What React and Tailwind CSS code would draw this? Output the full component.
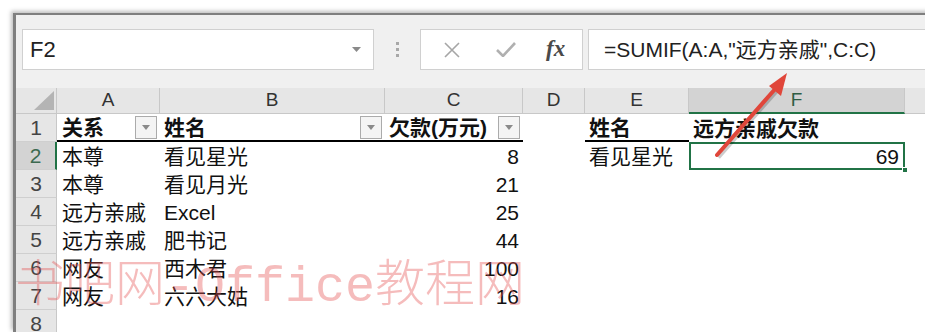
import React from 'react';

const FONT = '"Liberation Sans", "Noto Sans CJK SC", sans-serif';

const cols = [
  { key: 'A', w: 'w-[103px]' },
  { key: 'B', w: 'w-[225px]' },
  { key: 'C', w: 'w-[138px]' },
  { key: 'D', w: 'w-[62px]' },
  { key: 'E', w: 'w-[104px]' },
  { key: 'F', w: 'w-[216px]' },
  { key: 'G', w: 'flex-1' },
];

const rows = [
  { n: 1, A: '关系', B: '姓名', C: '欠款(万元)', E: '姓名', F: '远方亲戚欠款', head: true },
  { n: 2, A: '本尊', B: '看见星光', C: '8', E: '看见星光', F: '69' },
  { n: 3, A: '本尊', B: '看见月光', C: '21' },
  { n: 4, A: '远方亲戚', B: 'Excel', C: '25' },
  { n: 5, A: '远方亲戚', B: '肥书记', C: '44' },
  { n: 6, A: '网友', B: '西木君', C: '100' },
  { n: 7, A: '网友', B: '六六大姑', C: '16' },
  { n: 8 },
];

function FilterButton() {
  return (
    <div className="ml-auto mr-[3px] w-[22px] h-[23px] border border-[#ababab] bg-[#f4f4f4] flex items-center justify-center">
      <svg width="8" height="5" viewBox="0 0 8 5"><path d="M0 0h8L4 5z" fill="#8a8a8a" /></svg>
    </div>
  );
}

function Cell({ col, row }) {
  const v = row[col.key];
  const isNum = col.key === 'C' && !row.head;
  const selected = col.key === 'F' && row.n === 2;
  const underline = row.head && ['A', 'B', 'C', 'E'].includes(col.key);
  let cls = `${col.w} h-[28px] shrink-0 flex items-center relative `;
  if (underline) cls += 'border-b-2 border-black ';
  if (selected) cls += 'border-2 border-[#217346] ';
  const pad = col.key === 'A' ? 'pl-[5px]' : 'pl-[4px]';
  return (
    <div className={cls}>
      {v && (
        <span
          className={`${isNum || selected ? 'ml-auto pr-[4px]' : pad} text-[21px] leading-none whitespace-nowrap text-[#111] ${row.head ? 'font-bold' : ''}`}
        >
          {v}
        </span>
      )}
      {row.head && ['A', 'B', 'C'].includes(col.key) && <FilterButton />}
      {selected && <div className="absolute right-[-5px] bottom-[-5px] w-[6px] h-[6px] bg-[#217346] border border-white" />}
    </div>
  );
}

export default function App() {
  return (
    <div className="w-[925px] h-[332px] overflow-hidden bg-white pt-[13px] pl-[13px] relative" style={{ fontFamily: FONT }}>
      <div className="h-full w-[920px] border-t-2 border-l-[3px] border-[#7f7f7f] bg-[#f0f0f0] shadow-[-2px_-2px_4px_rgba(0,0,0,0.25)]">
        {/* formula bar */}
        <div className="h-[73px] flex items-start pt-[14px] pl-[6px]">
          <div className="w-[352px] h-[41px] bg-white border border-[#d0d0d0] flex items-center pl-[7px] pr-[12px]">
            <span className="text-[22px] text-[#222]">F2</span>
            <svg className="ml-auto" width="9" height="5" viewBox="0 0 9 5"><path d="M0 0h9L4.5 5z" fill="#8a8a8a" /></svg>
          </div>
          <div className="w-[46px] h-[41px] flex flex-col items-center justify-center gap-[3px]">
            <div className="w-[3px] h-[3px] bg-[#a8a8a8]" />
            <div className="w-[3px] h-[3px] bg-[#a8a8a8]" />
            <div className="w-[3px] h-[3px] bg-[#a8a8a8]" />
          </div>
          <div className="w-[163px] h-[41px] bg-white border border-[#d0d0d0] flex items-center">
            <svg className="ml-[23px]" width="16" height="16" viewBox="0 0 16 16"><path d="M1 1l14 14M15 1L1 15" stroke="#a6a6a6" strokeWidth="1.6" /></svg>
            <svg className="ml-[36px]" width="20" height="15" viewBox="0 0 20 15"><path d="M1 8l6 6L19 1" stroke="#b0b0b0" strokeWidth="2.6" fill="none" /></svg>
            <span className="ml-[30px] text-[23px] italic font-bold text-[#4a4a4a]" style={{ fontFamily: '"Liberation Serif", serif' }}>fx</span>
          </div>
          <div className="ml-[5px] flex-1 h-[41px] bg-white border border-[#d0d0d0] border-r-0 flex items-center pl-[15px]">
            <span className="text-[21px] text-[#222] whitespace-nowrap">=SUMIF(A:A,"远方亲戚",C:C)</span>
          </div>
        </div>

        {/* column headers */}
        <div className="flex h-[26px] bg-white">
          <div className="w-[41px] shrink-0 bg-[#e6e6e6] border-r border-b border-[#c8c8c8] flex items-end justify-end pr-[2px] pb-[3px]">
            <svg width="20" height="19" viewBox="0 0 20 19"><path d="M20 0V19H0z" fill="#b4b4b4" /></svg>
          </div>
          {cols.map((c) => (
            <div
              key={c.key}
              className={`${c.w} shrink-0 flex items-center justify-center text-[19px] border-r ${
                c.key === 'F'
                  ? 'bg-[#d3d3d3] border-b-2 border-b-[#217346] border-r-[#c8c8c8] text-[#2f5d44]'
                  : 'bg-[#e6e6e6] border-b border-[#c8c8c8] text-[#333]'
              }`}
            >
              {c.key === 'G' ? '' : c.key}
            </div>
          ))}
        </div>

        {/* rows */}
        {rows.map((r) => (
          <div key={r.n} className="flex bg-white">
            <div
              className={`w-[41px] h-[28px] shrink-0 border-b border-[#cfcfcf] flex items-center justify-center text-[21px] ${
                r.n === 2 ? 'bg-[#d3d3d3] text-[#3c6a50] border-r-2 border-r-[#217346]' : 'bg-[#e6e6e6] text-[#444] border-r border-r-[#c8c8c8]'
              }`}
            >
              {r.n}
            </div>
            {cols.map((c) => (
              <Cell key={c.key} col={c} row={r} />
            ))}
          </div>
        ))}
      </div>

      {/* watermark */}
      <div className="absolute left-[15px] top-[254px] text-[50px] leading-none whitespace-nowrap text-[rgba(230,80,80,0.38)] pointer-events-none flex items-baseline">
        <span style={{ fontFamily: '"Noto Sans CJK SC", sans-serif' }} className="font-light">书吧网</span>
        <span style={{ fontFamily: '"Liberation Mono", "Noto Sans CJK SC", monospace' }}>-Office</span>
        <span style={{ fontFamily: '"Noto Sans CJK SC", sans-serif' }} className="font-light">教程网</span>
      </div>

      {/* arrow */}
      <svg className="absolute left-0 top-0 pointer-events-none" width="925" height="332" viewBox="0 0 925 332">
        <line x1="717" y1="155" x2="776" y2="88" stroke="rgba(0,0,0,0.2)" strokeWidth="5" transform="translate(1 2)" />
        <line x1="717" y1="155" x2="776" y2="88" stroke="#e0463a" strokeWidth="4" strokeLinecap="round" />
        <path d="M787 73L769 86L781 96z" fill="#e0463a" />
      </svg>
    </div>
  );
}
